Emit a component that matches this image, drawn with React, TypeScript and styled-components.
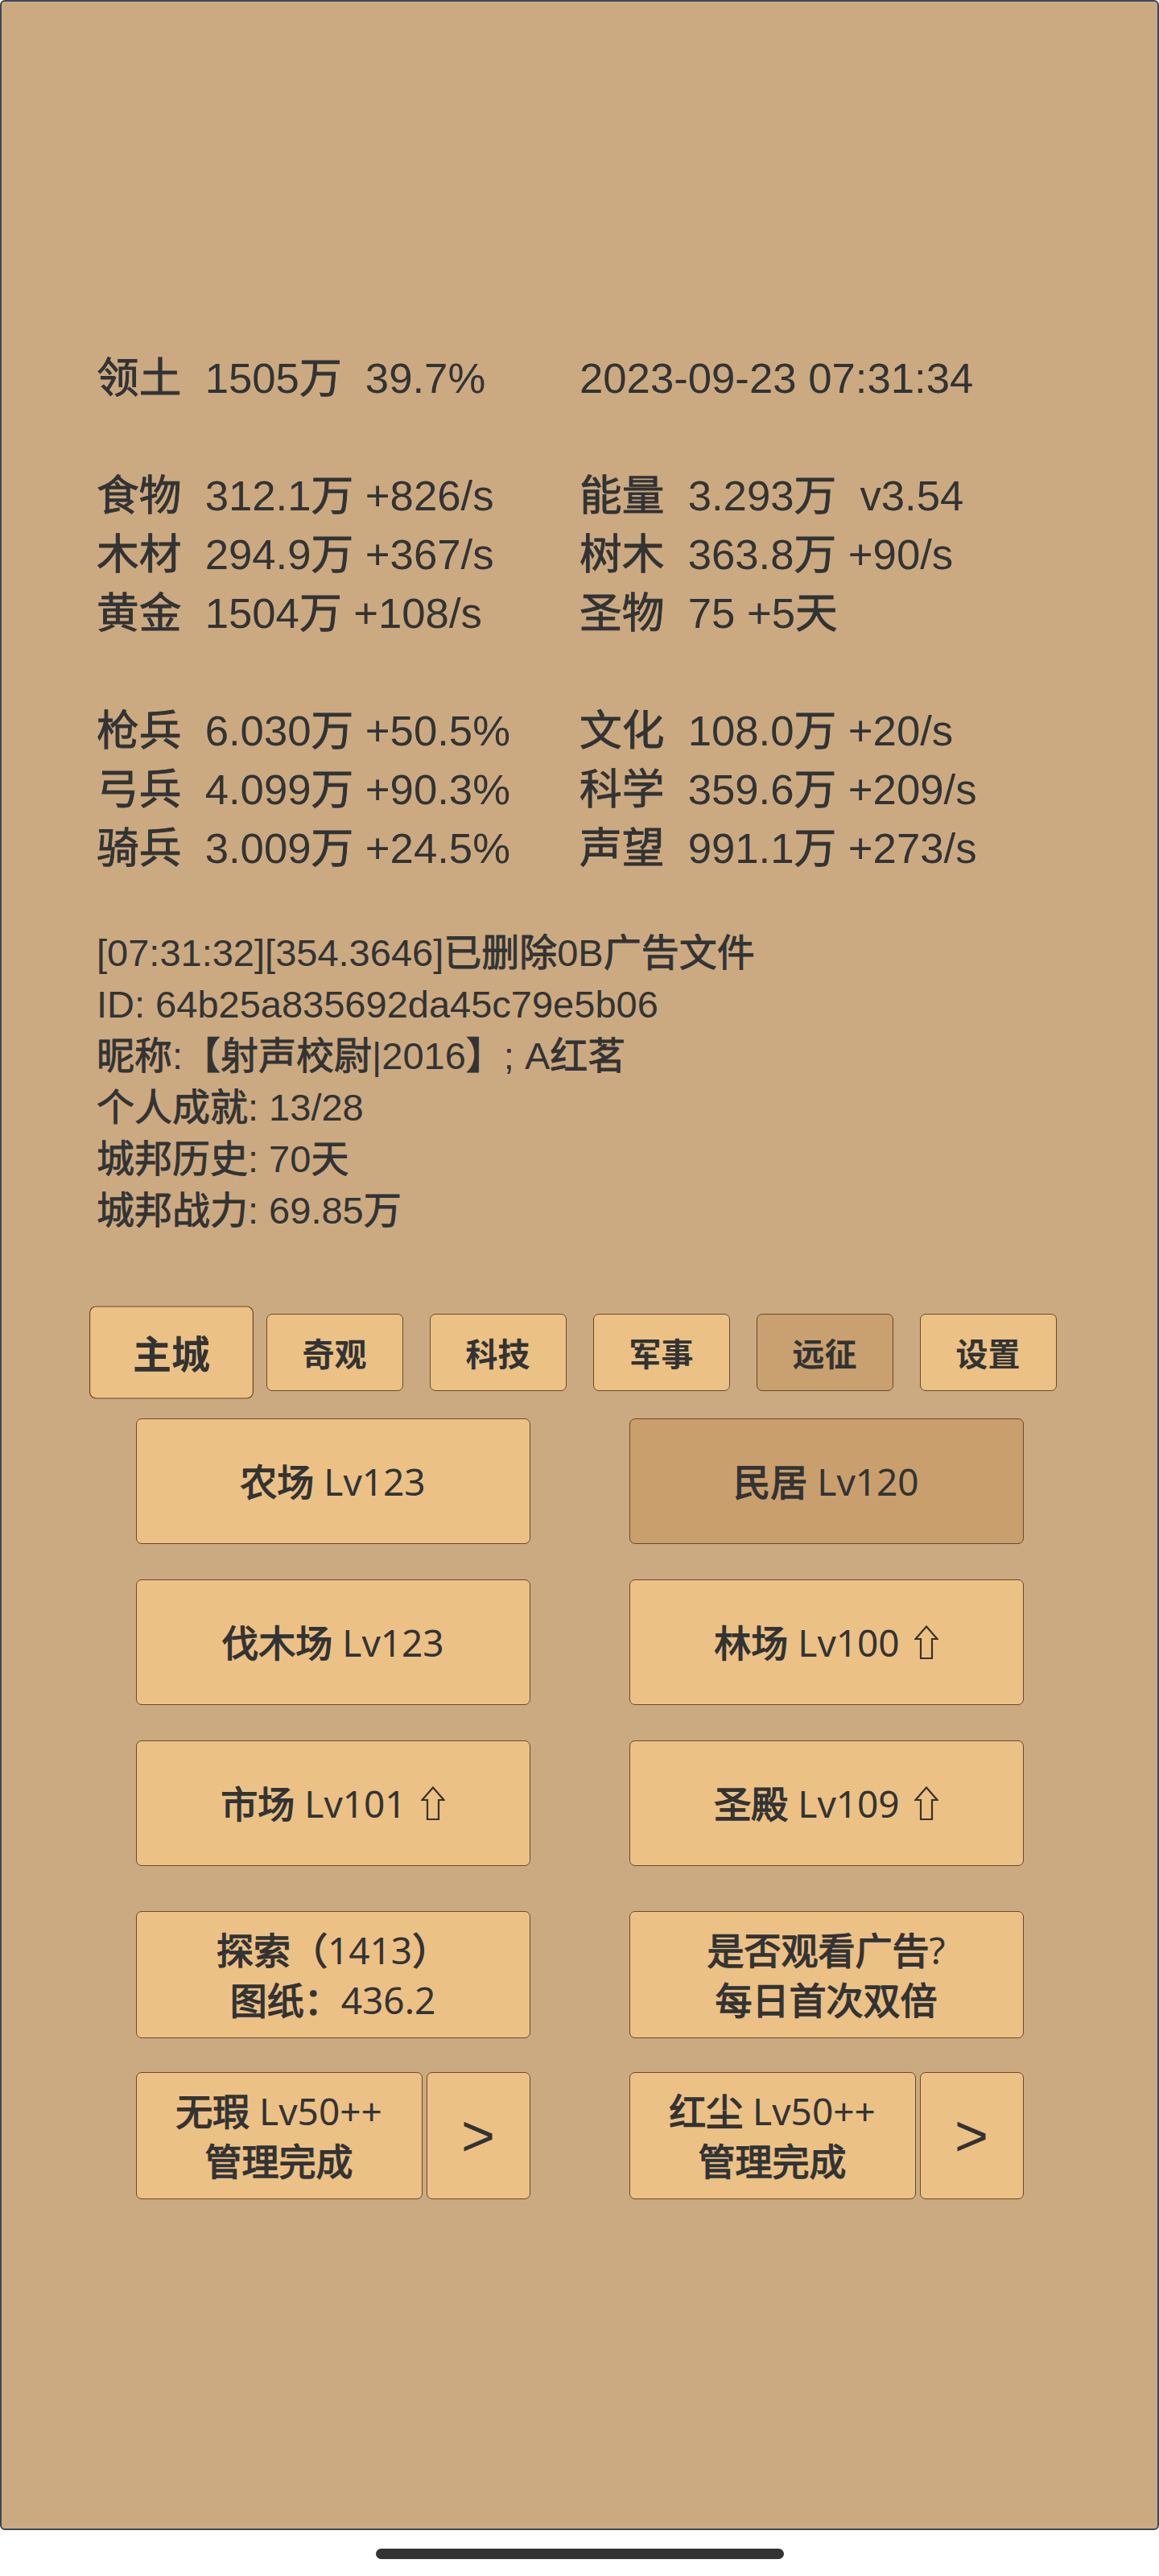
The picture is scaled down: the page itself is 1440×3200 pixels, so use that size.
import React, { FC, ReactNode } from 'react';
import styled, { createGlobalStyle } from 'styled-components';

const GlobalStyle = createGlobalStyle`
  html, body {
    margin: 0;
    padding: 0;
    background: #ffffff;
  }
  * {
    box-sizing: border-box;
  }
`;

const Page = styled.div`
  width: 1440px;
  height: 3200px;
  display: flex;
  flex-direction: column;
  align-items: center;
`;

const Frame = styled.div`
  width: 1440px;
  height: 3143px;
  background: #cbaa82;
  border: 2px solid #3a4759;
  border-radius: 6px;
  display: flex;
  flex-direction: column;
  color: #333333;
`;

// CJK glyphs render a little heavier on the device than Noto Regular does here
const Han = styled.span<{ $heavy?: boolean }>`
  -webkit-text-stroke: ${p => (p.$heavy ? '1.4px' : '0.9px')} currentColor;
`;

const withHan = (text: string, heavy?: boolean): ReactNode[] =>
  text
    .split(/([\u3000-\u303f\u4e00-\u9fff\uff01-\uff1f]+)/)
    .filter(Boolean)
    .map((part, i) =>
      /[\u3000-\u303f\u4e00-\u9fff\uff01-\uff1f]/.test(part) ? (
        <Han key={i} $heavy={heavy}>{part}</Han>
      ) : (
        part
      ),
    );

const Stats = styled.section`
  margin-top: 431px;
  padding-left: 118px;
  display: flex;
  flex-direction: column;
  gap: 73px;
`;

const StatGroup = styled.div`
  display: grid;
  grid-template-columns: 600px 1fr;
  grid-auto-rows: 73px;
`;

const StatCell = styled.div`
  font-family: "Liberation Sans", "Noto Sans CJK SC", sans-serif;
  font-size: 52.7px;
  line-height: 73px;
  white-space: pre;
`;

const Info = styled.section`
  margin-top: 62px;
  padding-left: 118px;
  display: flex;
  flex-direction: column;
`;

const InfoLine = styled.div`
  font-family: "Liberation Sans", "Noto Sans CJK SC", sans-serif;
  font-size: 47px;
  line-height: 64px;
  white-space: pre;
`;

const Tabs = styled.nav`
  margin-top: 96px;
  display: flex;
  justify-content: center;
`;

const TabSlot = styled.div`
  width: 203px;
  height: 96px;
  display: flex;
  justify-content: center;
`;

const Tab = styled.div<{ $main?: boolean; $active?: boolean }>`
  width: 170px;
  height: 96px;
  display: flex;
  align-items: center;
  justify-content: center;
  background: ${p => (p.$active ? '#c9a06f' : '#ebc186')};
  border: 1px solid #6a4a28;
  border-radius: 7px;
  font-family: "Noto Sans", "Noto Sans CJK SC", sans-serif;
  font-size: 40px;
  font-weight: 700;
  transform: ${p => (p.$main ? 'scale(1.2)' : 'none')};
`;

const Buildings = styled.section`
  margin-top: 34px;
  display: grid;
  grid-template-columns: 490px 490px;
  grid-auto-rows: 156px;
  column-gap: 123px;
  row-gap: 44px;
  justify-content: center;
`;

const Extras = styled(Buildings)`
  margin-top: 56px;
  grid-auto-rows: 158px;
  row-gap: 42px;
`;

const Button = styled.div<{ $active?: boolean }>`
  display: flex;
  flex-direction: column;
  align-items: center;
  justify-content: center;
  background: ${p => (p.$active ? '#c99f6e' : '#ebc186')};
  border: 1px solid #6a4a28;
  border-radius: 7px;
  font-family: "Noto Sans", "Noto Sans CJK SC", sans-serif;
  font-size: 46px;
  line-height: 62px;
  white-space: pre;
`;

const Label = styled.div`
  display: flex;
  align-items: center;
`;

const UpArrow = styled.svg`
  width: 30px;
  height: 42px;
  margin-left: 18px;
`;

const Split = styled.div`
  display: flex;
  gap: 5px;
`;

const SplitMain = styled(Button)`
  flex: 1;
`;

const SplitArrow = styled(Button)`
  width: 129px;
  font-family: "Liberation Sans", sans-serif;
  font-size: 72px;
`;

const HomeBar = styled.div`
  margin-top: 23px;
  width: 507px;
  height: 13px;
  border-radius: 7px;
  background: #333333;
`;

const Arrow: FC = () => (
  <UpArrow viewBox="0 0 30 42">
    <polygon
      points="15,1.5 28.5,17 22,17 22,41 8,41 8,17 1.5,17"
      fill="none"
      stroke="#3a3226"
      strokeWidth="2.2"
      strokeLinejoin="miter"
    />
  </UpArrow>
);

const statGroups: [string, string][][] = [
  [['领土  1505万  39.7%', '2023-09-23 07:31:34']],
  [
    ['食物  312.1万 +826/s', '能量  3.293万  v3.54'],
    ['木材  294.9万 +367/s', '树木  363.8万 +90/s'],
    ['黄金  1504万 +108/s', '圣物  75 +5天'],
  ],
  [
    ['枪兵  6.030万 +50.5%', '文化  108.0万 +20/s'],
    ['弓兵  4.099万 +90.3%', '科学  359.6万 +209/s'],
    ['骑兵  3.009万 +24.5%', '声望  991.1万 +273/s'],
  ],
];

const infoLines = [
  '[07:31:32][354.3646]已删除0B广告文件',
  'ID: 64b25a835692da45c79e5b06',
  '昵称:【射声校尉|2016】; A红茗',
  '个人成就: 13/28',
  '城邦历史: 70天',
  '城邦战力: 69.85万',
];

const tabs = [
  { name: '主城', main: true },
  { name: '奇观' },
  { name: '科技' },
  { name: '军事' },
  { name: '远征', active: true },
  { name: '设置' },
];

const buildings = [
  { name: '农场 Lv123' },
  { name: '民居 Lv120', active: true },
  { name: '伐木场 Lv123' },
  { name: '林场 Lv100', up: true },
  { name: '市场 Lv101', up: true },
  { name: '圣殿 Lv109', up: true },
];

const App: FC = () => (
  <Page>
    <GlobalStyle />
    <Frame>
      <Stats>
        {statGroups.map((group, gi) => (
          <StatGroup key={gi}>
            {group.map(([left, right]) => (
              <React.Fragment key={left}>
                <StatCell>{withHan(left)}</StatCell>
                <StatCell>{withHan(right)}</StatCell>
              </React.Fragment>
            ))}
          </StatGroup>
        ))}
      </Stats>

      <Info>
        {infoLines.map(line => (
          <InfoLine key={line}>{withHan(line)}</InfoLine>
        ))}
      </Info>

      <Tabs>
        {tabs.map(t => (
          <TabSlot key={t.name}>
            <Tab $main={t.main} $active={t.active}>{t.name}</Tab>
          </TabSlot>
        ))}
      </Tabs>

      <Buildings>
        {buildings.map(b => (
          <Button key={b.name} $active={b.active}>
            <Label>
              {withHan(b.name, true)}
              {b.up && <Arrow />}
            </Label>
          </Button>
        ))}
      </Buildings>

      <Extras>
        <Button>
          <div>{withHan('探索（1413）', true)}</div>
          <div>{withHan('图纸：436.2', true)}</div>
        </Button>
        <Button>
          <div>{withHan('是否观看广告?', true)}</div>
          <div>{withHan('每日首次双倍', true)}</div>
        </Button>
        <Split>
          <SplitMain>
            <div>{withHan('无瑕 Lv50++', true)}</div>
            <div>{withHan('管理完成', true)}</div>
          </SplitMain>
          <SplitArrow>&gt;</SplitArrow>
        </Split>
        <Split>
          <SplitMain>
            <div>{withHan('红尘 Lv50++', true)}</div>
            <div>{withHan('管理完成', true)}</div>
          </SplitMain>
          <SplitArrow>&gt;</SplitArrow>
        </Split>
      </Extras>
    </Frame>
    <HomeBar />
  </Page>
);

export default App;
